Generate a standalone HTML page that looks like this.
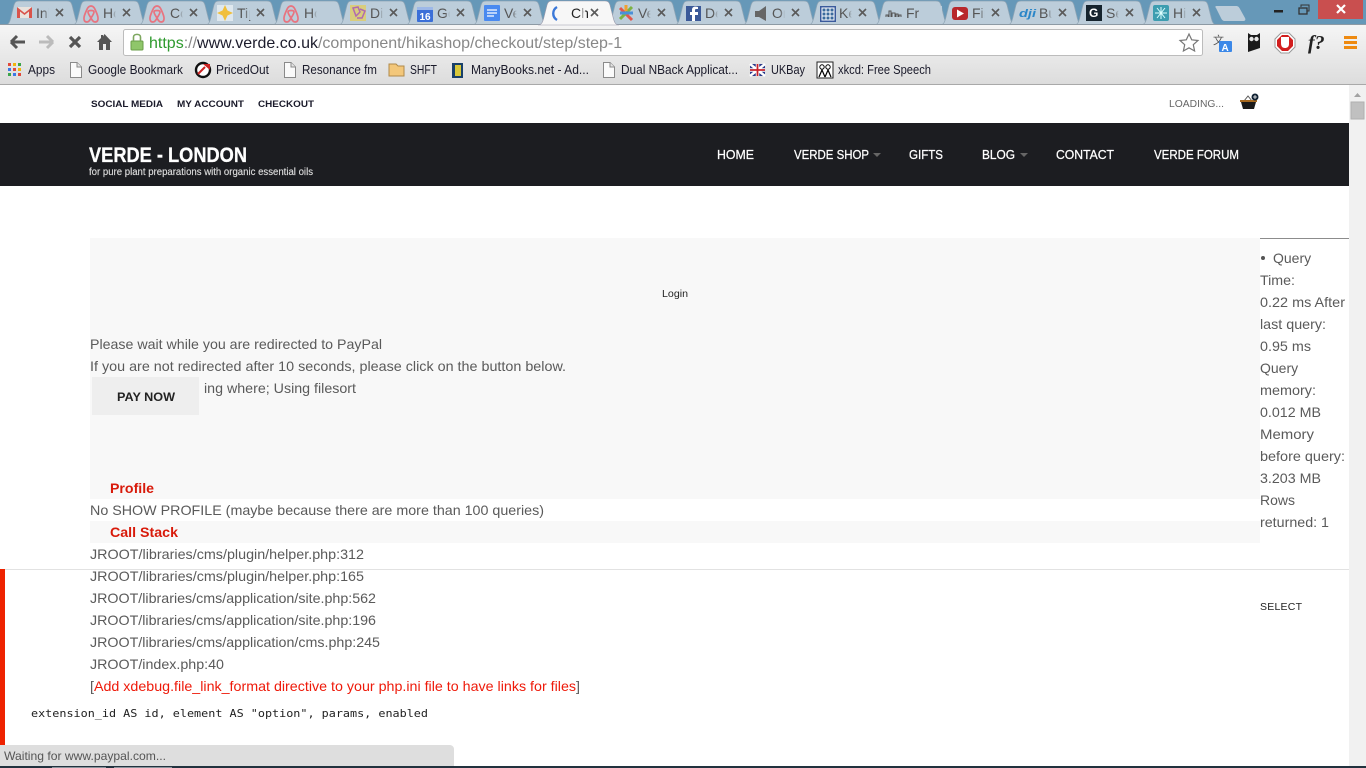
<!DOCTYPE html>
<html lang="en"><head><meta charset="utf-8"><title>Checkout</title>
<style>
html,body{margin:0;padding:0;background:#fff;overflow:hidden;width:1366px;height:768px}
svg{display:block;position:absolute;left:0;top:0}
text{font-family:"Liberation Sans",sans-serif;white-space:pre}
.b{font-size:14px;fill:#5a5a5a}
.t{font-size:14px;fill:#555}
.c{font-size:12.5px;fill:#1a1a2a}
.x{stroke:#5a5a5a;stroke-width:1.6;fill:none}
.n{font-size:12.5px;fill:#fff;stroke:#fff;stroke-width:.25}
</style></head><body>
<svg width="1366" height="768" viewBox="0 0 1366 768">
<defs>
<linearGradient id="tb" x1="0" y1="0" x2="0" y2="1"><stop offset="0" stop-color="#f6f6f6"/><stop offset="1" stop-color="#dcdcdc"/></linearGradient>
<linearGradient id="fd"><stop offset="0" stop-color="#bccdda" stop-opacity="0"/><stop offset="1" stop-color="#bccdda"/></linearGradient>
<linearGradient id="fa"><stop offset="0" stop-color="#f7f7f7" stop-opacity="0"/><stop offset="1" stop-color="#f7f7f7"/></linearGradient>
<path id="tab" d="M-12 25C-8 25-7 21-6 17L-3 5C-2 2-1 1 2 1H50C53 1 54 2 55 5L58 17C59 21 60 25 64 25Z" fill="#bccdda" stroke="#8ea4b4" stroke-width=".7"/>
<path id="cl" d="M0 0L7 7M7 0L0 7" class="x"/>
<g id="fade"><rect x="8" y="6" width="5" height="14" fill="url(#fd)"/><rect x="13" y="6" width="19" height="14" fill="#bccdda"/></g>
<g id="doc"><path d="M1.500 .5H8L12.500 5V15.500H1.500Z" fill="#fafafa" stroke="#8a8a8a"/><path d="M8 .5V5H12.500" fill="#e4e4e4" stroke="#8a8a8a"/></g>
</defs>
<rect width="1366" height="25" fill="#6698b8"/>
<rect x="1318" y="0" width="45" height="19" fill="#c94f4f"/>
<path d="M1337 5L1345 13M1345 5L1337 13" stroke="#fff" stroke-width="2.200"/>
<rect x="1274" y="10" width="9" height="2.500" fill="#222"/>
<rect x="1299" y="8" width="8" height="6" fill="none" stroke="#333" stroke-width="1.300"/><path d="M1301 7V5H1309V11H1307" fill="none" stroke="#333" stroke-width="1"/>
<path d="M1217 6H1236C1238 6 1239 7 1240 9L1245 18C1246 20 1245 21 1243 21H1225C1223 21 1222 20 1221 18L1216 8C1215 7 1215 6 1217 6Z" fill="#bccdda"/>

<!-- tabs -->
<use href="#tab" x="17"/><use href="#tab" x="84"/><use href="#tab" x="150"/><use href="#tab" x="217"/><use href="#tab" x="284"/><use href="#tab" x="350"/><use href="#tab" x="417"/><use href="#tab" x="484"/><use href="#tab" x="618"/><use href="#tab" x="686"/><use href="#tab" x="754"/><use href="#tab" x="820"/><use href="#tab" x="886"/><use href="#tab" x="952"/><use href="#tab" x="1019"/><use href="#tab" x="1086"/><use href="#tab" x="1153"/>

<rect y="24" width="1366" height="61" fill="url(#tb)"/>
<rect y="24" width="1366" height="1" fill="#8d9aa4"/>
<path d="M538 25C542 25 543 21 544 17L547 5C548 2 549 1 552 1H605C608 1 609 2 610 5L613 17C614 21 615 25 619 25Z" fill="#f7f7f7" stroke="#99a" stroke-width=".6"/>

<!-- tab labels -->
<text class="t" x="36" y="18">Inb</text><text class="t" x="103" y="18">Ho</text><text class="t" x="170" y="18">Co</text><text class="t" x="237" y="18">Tip</text><text class="t" x="304" y="18">Ho</text><text class="t" x="370" y="18">Dis</text><text class="t" x="437" y="18">Go</text><text class="t" x="504" y="18">Ve</text><text x="571" y="18" font-size="14" fill="#222">Ch</text><text class="t" x="638" y="18">Ve</text><text class="t" x="705" y="18">De</text><text class="t" x="772" y="18">On</text><text class="t" x="839" y="18">Ke</text><text class="t" x="906" y="18">Fr</text><text class="t" x="972" y="18">Fin</text><text class="t" x="1039" y="18">Bu</text><text class="t" x="1106" y="18">Se</text><text class="t" x="1173" y="18">Hi</text>
<use href="#fade" x="36"/><use href="#fade" x="103"/><use href="#fade" x="170"/><use href="#fade" x="237"/><use href="#fade" x="304"/><use href="#fade" x="370"/><use href="#fade" x="437"/><use href="#fade" x="504"/><use href="#fade" x="638"/><use href="#fade" x="705"/><use href="#fade" x="772"/><use href="#fade" x="839"/><use href="#fade" x="910"/><use href="#fade" x="972"/><use href="#fade" x="1039"/><use href="#fade" x="1106"/><use href="#fade" x="1173"/>
<rect x="579" y="6" width="6" height="14" fill="url(#fa)"/>

<!-- favicons -->
<rect x="17" y="7" width="15" height="11" fill="#e9e3de"/><path d="M17 7L24.500 13L32 7V18H29V11.500L24.500 15L20 11.500V18H17Z" fill="#d9534a"/>
<g fill="none" stroke="#e8737f" stroke-width="1.700"><path d="M91 6C88 6 87 9 85 14C83 19 84 22 87 22C89 22 90 20 91 18C92 20 93 22 95 22C98 22 99 19 97 14C95 9 94 6 91 6ZM91 18C89 15 88 13 88 12C88 10 94 10 94 12C94 13 93 15 91 18Z"/>
<path d="M157 6C154 6 153 9 151 14C149 19 150 22 153 22C155 22 156 20 157 18C158 20 159 22 161 22C164 22 165 19 163 14C161 9 160 6 157 6ZM157 18C155 15 154 13 154 12C154 10 160 10 160 12C160 13 159 15 157 18Z"/>
<path d="M291 6C288 6 287 9 285 14C283 19 284 22 287 22C289 22 290 20 291 18C292 20 293 22 295 22C298 22 299 19 297 14C295 9 294 6 291 6ZM291 18C289 15 288 13 288 12C288 10 294 10 294 12C294 13 293 15 291 18Z"/></g>
<rect x="217" y="5" width="16" height="16" fill="#dfe8ee"/><path d="M225 5L227.500 10.500L233 13L227.500 15.500L225 21L222.500 15.500L217 13L222.500 10.500Z" fill="#f0bf3c"/>
<rect x="350" y="5" width="16" height="16" fill="#d9cd7c"/><path d="M353 8L358 7L360 12L356 16ZM360 9L365 11L362 18L357 18" fill="none" stroke="#b06ab0" stroke-width="1.500"/>
<rect x="417" y="7" width="16" height="15" rx="1" fill="#3b6fd8"/><rect x="417" y="7" width="16" height="3" fill="#9db8e8"/><text x="419.500" y="20" font-size="10" font-weight="bold" fill="#fff">16</text>
<rect x="484" y="5" width="16" height="16" rx="1" fill="#4a8af0"/><path d="M487 10H497M487 13H497M487 16H494" stroke="#fff" stroke-width="1.200"/>
<path d="M557 7C552 10 552 17 557 20" fill="none" stroke="#3b78d8" stroke-width="2.400"/>
<g stroke-width="3" fill="none"><path d="M620 8L632 20" stroke="#e2574c"/><path d="M632 7L620 19" stroke="#7cb342"/><path d="M626 5V11" stroke="#f0a030"/><path d="M620 13H633" stroke="#4a90d9"/></g>
<rect x="686" y="6" width="15" height="15" fill="#3b5998"/><path d="M695 21V15H698V12H695V10C695 9 696 9 698 9V7C694 6 692 7 692 10V12H690V15H692V21Z" fill="#fff"/>
<path d="M755 11H759L766 6V21L759 17H755Z" fill="#666"/>
<rect x="820" y="6" width="16" height="16" fill="#3a5a9c"/><path d="M822 8H834V20H822ZM822 12H834M822 16H834M826 8V20M830 8V20" stroke="#fff" stroke-width="1" fill="#3a6a9c"/>
<path d="M886 17V15H888V17M889 17V11H891V17M892 17V13H895V17M896 17V14H898V17M899 17V15H901V17" stroke="#555" stroke-width="1" fill="none"/>
<rect x="952" y="7" width="16" height="13" rx="3" fill="#b8282c"/><path d="M957 9.500L964 13.500L957 17.500Z" fill="#fff"/>
<text x="1019" y="17" font-size="11" font-weight="bold" font-style="italic" fill="#2a86c8" textLength="17" lengthAdjust="spacingAndGlyphs">dji</text>
<rect x="1086" y="5" width="16" height="16" fill="#15232d"/><text x="1089" y="17" font-size="12" font-weight="bold" fill="#fff">G</text>
<rect x="1153" y="5" width="16" height="16" rx="2" fill="#3d9db0"/><path d="M1161 7V19M1155 13H1167M1157 8L1165 18M1165 8L1157 18" stroke="#dff" stroke-width="1"/>

<!-- close -->
<use href="#cl" x="56" y="9"/><use href="#cl" x="123" y="9"/><use href="#cl" x="190" y="9"/><use href="#cl" x="257" y="9"/><use href="#cl" x="390" y="9"/><use href="#cl" x="457" y="9"/><use href="#cl" x="524" y="9"/><use href="#cl" x="591" y="9"/><use href="#cl" x="658" y="9"/><use href="#cl" x="725" y="9"/><use href="#cl" x="792" y="9"/><use href="#cl" x="859" y="9"/><use href="#cl" x="992" y="9"/><use href="#cl" x="1059" y="9"/><use href="#cl" x="1126" y="9"/><use href="#cl" x="1193" y="9"/>

<!-- toolbar -->
<path d="M25 42H11M11 42L17 36M11 42L17 48" stroke="#555" stroke-width="3" fill="none"/>
<path d="M39 42H53M53 42L47 36M53 42L47 48" stroke="#bbb" stroke-width="3" fill="none"/>
<path d="M70 37L80 47M80 37L70 47" stroke="#555" stroke-width="3.200"/>
<path d="M104.500 34L112 42H110V50H106V44H103V50H99V42H97L101 38V35H103V36.500Z" fill="#555"/>
<rect x="123.500" y="29.500" width="1079" height="26" rx="2" fill="#fff" stroke="#bcbcbc"/>
<rect x="131" y="41" width="12" height="9" rx="1" fill="#8fc66a" stroke="#6a9e48"/><path d="M133.500 41V37C133.500 33.500 140.500 33.500 140.500 37V41" fill="none" stroke="#7da75f" stroke-width="1.600"/>
<text x="149" y="48" font-size="16" fill="#888"><tspan fill="#2e9a2e">https</tspan><tspan fill="#888">://</tspan><tspan fill="#1c1c2c">www.verde.co.uk</tspan><tspan>/component/hikashop/checkout/step/step-1</tspan></text>
<path d="M1189 34L1191.700 39.800L1198 40.500L1193.300 44.700L1194.600 51L1189 47.800L1183.400 51L1184.700 44.700L1180 40.500L1186.300 39.800Z" fill="#fff" stroke="#777" stroke-width="1.200"/>
<text x="1213" y="44" font-size="11" fill="#555" style="font-family:'Noto Sans CJK SC',sans-serif">文</text>
<rect x="1219" y="41" width="13" height="11" rx="1" fill="#3b88e8"/><text x="1221.500" y="51" font-size="10" font-weight="bold" fill="#fff">A</text>
<path d="M1248 33L1251 35H1257L1260 33V48L1248 52Z" fill="#1a1a1a"/><circle cx="1251.500" cy="39" r="2.200" fill="#e6e6e6"/><circle cx="1256.500" cy="39" r="2.200" fill="#e6e6e6"/>
<path d="M1281 33H1289L1295 39V47L1289 53H1281L1275 47V39Z" fill="#fff" stroke="#999"/><path d="M1282 35H1288L1293 40V46L1288 51H1282L1277 46V40Z" fill="#d21f1f"/><path d="M1281 43V37H1289V44C1289 47 1287 48 1285 48C1282 48 1281 46 1281 43Z" fill="#fff"/>
<text x="1308" y="49" font-size="20" font-style="italic" fill="#222" style="font-family:'Liberation Serif',serif;font-weight:bold">f?</text>
<rect x="1344" y="36" width="13" height="3" fill="#ee8a10"/><rect x="1344" y="41" width="13" height="3" fill="#ee8a10"/><rect x="1344" y="46" width="13" height="3" fill="#ee8a10"/>

<!-- bookmarks -->
<rect x="8" y="63" width="3" height="3" fill="#e2493b"/><rect x="13" y="63" width="3" height="3" fill="#f2b50c"/><rect x="18" y="63" width="3" height="3" fill="#3ca54a"/>
<rect x="8" y="68" width="3" height="3" fill="#3b78e7"/><rect x="13" y="68" width="3" height="3" fill="#e2493b"/><rect x="18" y="68" width="3" height="3" fill="#f2b50c"/>
<rect x="8" y="73" width="3" height="3" fill="#3ca54a"/><rect x="13" y="73" width="3" height="3" fill="#3b78e7"/><rect x="18" y="73" width="3" height="3" fill="#e2493b"/>
<text class="c" x="28" y="74" textLength="27" lengthAdjust="spacingAndGlyphs">Apps</text>
<text class="c" x="88" y="74" textLength="95" lengthAdjust="spacingAndGlyphs">Google Bookmark</text>
<text class="c" x="216" y="74" textLength="53" lengthAdjust="spacingAndGlyphs">PricedOut</text>
<text class="c" x="302" y="74" textLength="75" lengthAdjust="spacingAndGlyphs">Resonance fm</text>
<text class="c" x="410" y="74" textLength="27" lengthAdjust="spacingAndGlyphs">SHFT</text>
<text class="c" x="471" y="74" textLength="118" lengthAdjust="spacingAndGlyphs">ManyBooks.net - Ad...</text>
<text class="c" x="621" y="74" textLength="117" lengthAdjust="spacingAndGlyphs">Dual NBack Applicat...</text>
<text class="c" x="771" y="74" textLength="34" lengthAdjust="spacingAndGlyphs">UKBay</text>
<text class="c" x="838" y="74" textLength="93" lengthAdjust="spacingAndGlyphs">xkcd: Free Speech</text>
<use href="#doc" x="69" y="62"/><use href="#doc" x="283" y="62"/><use href="#doc" x="602" y="62"/>
<circle cx="203" cy="70" r="7" fill="#fff" stroke="#111" stroke-width="2.400"/><path d="M198 74L205 67" stroke="#c22" stroke-width="2"/><path d="M203 64H210V70Z" fill="#c22"/>
<path d="M389 64H396L398 66H404V76H389Z" fill="#f3c77a" stroke="#b08a4a"/>
<rect x="452" y="63" width="11" height="15" fill="#18406a"/><rect x="455" y="65" width="6" height="11" fill="#d8c83a"/>
<rect x="750" y="64" width="15" height="12" fill="#2a3a8a"/><path d="M750 64L765 76M765 64L750 76" stroke="#fff" stroke-width="2.500"/><path d="M757.500 64V76M750 70H765" stroke="#fff" stroke-width="3.500"/><path d="M757.500 64V76M750 70H765" stroke="#c8232c" stroke-width="1.800"/>
<rect x="817" y="62" width="16" height="16" fill="#fff" stroke="#222"/><circle cx="822" cy="67" r="2.200" fill="none" stroke="#000"/><circle cx="828" cy="67" r="2.200" fill="none" stroke="#000"/><path d="M819 77L822 70L825 77M825 77L828 70L831 77" stroke="#000" fill="none" stroke-width="1.200"/>
<rect y="84" width="1366" height="1" fill="#a9a9a9"/>

<!-- page -->
<rect y="85" width="1349" height="683" fill="#fff"/>
<text x="91" y="107" font-size="9.500" font-weight="bold" fill="#1a1a2a" textLength="72" lengthAdjust="spacingAndGlyphs">SOCIAL MEDIA</text>
<text x="177" y="107" font-size="9.500" font-weight="bold" fill="#1a1a2a" textLength="67" lengthAdjust="spacingAndGlyphs">MY ACCOUNT</text>
<text x="258" y="107" font-size="9.500" font-weight="bold" fill="#1a1a2a" textLength="56" lengthAdjust="spacingAndGlyphs">CHECKOUT</text>
<text x="1169" y="107" font-size="10.500" fill="#666" textLength="55" lengthAdjust="spacingAndGlyphs">LOADING...</text>
<path d="M1241 102H1256L1254 109H1243Z" fill="#1a1a1a"/><path d="M1244 101L1248 96L1252 101" fill="none" stroke="#555"/><rect x="1240" y="100" width="17" height="2" fill="#a86a20"/><circle cx="1255" cy="97" r="3.500" fill="#123"/><path d="M1253 97H1257M1255 95V99" stroke="#fff" stroke-width=".8"/>

<rect y="123" width="1349" height="63" fill="#1c1d21"/>
<text x="89" y="162" font-size="21" font-weight="bold" fill="#fff" stroke="#fff" stroke-width=".3" textLength="158" lengthAdjust="spacingAndGlyphs" style="font-family:'Liberation Sans Narrow','Liberation Sans',sans-serif">VERDE - LONDON</text>
<text x="89" y="175" font-size="10" fill="#dcdcdc" stroke="#dcdcdc" stroke-width=".15" textLength="224" lengthAdjust="spacingAndGlyphs">for pure plant preparations with organic essential oils</text>
<text class="n" x="717" y="159" textLength="37" lengthAdjust="spacingAndGlyphs">HOME</text>
<text class="n" x="794" y="159" textLength="75" lengthAdjust="spacingAndGlyphs">VERDE SHOP</text>
<text class="n" x="909" y="159" textLength="34" lengthAdjust="spacingAndGlyphs">GIFTS</text>
<text class="n" x="982" y="159" textLength="33" lengthAdjust="spacingAndGlyphs">BLOG</text>
<text class="n" x="1056" y="159" textLength="58" lengthAdjust="spacingAndGlyphs">CONTACT</text>
<text class="n" x="1154" y="159" textLength="85" lengthAdjust="spacingAndGlyphs">VERDE FORUM</text>
<path d="M873 153H881L877 157ZM1020 153H1028L1024 157Z" fill="#666"/>

<rect x="90" y="238" width="1170" height="261" fill="#f8f8f8"/>
<rect x="90" y="521" width="1170" height="22" fill="#f8f8f8"/>
<rect x="1260" y="238" width="89" height="1" fill="#8c8c8c"/>
<rect y="569" width="1349" height="1" fill="#e2e2e2"/>
<rect y="569" width="5" height="199" fill="#ee2200"/>

<text x="662" y="297" font-size="10" fill="#222" textLength="26" lengthAdjust="spacingAndGlyphs">Login</text>
<text class="b" x="90" y="349" textLength="292" lengthAdjust="spacingAndGlyphs">Please wait while you are redirected to PayPal</text>
<text class="b" x="90" y="371" textLength="476" lengthAdjust="spacingAndGlyphs">If you are not redirected after 10 seconds, please click on the button below.</text>
<rect x="92" y="377" width="107" height="38" fill="#eeeeee"/>
<text x="117" y="401" font-size="12" font-weight="bold" fill="#222" textLength="58" lengthAdjust="spacingAndGlyphs">PAY NOW</text>
<text class="b" x="204" y="393" textLength="152" lengthAdjust="spacingAndGlyphs">ing where; Using filesort</text>
<text x="110" y="493" font-size="14" font-weight="bold" fill="#d81a0a" textLength="44" lengthAdjust="spacingAndGlyphs">Profile</text>
<text class="b" x="90" y="515" textLength="454" lengthAdjust="spacingAndGlyphs">No SHOW PROFILE (maybe because there are more than 100 queries)</text>
<text x="110" y="537" font-size="14" font-weight="bold" fill="#d81a0a" textLength="68" lengthAdjust="spacingAndGlyphs">Call Stack</text>
<text class="b" x="90" y="559" textLength="274" lengthAdjust="spacingAndGlyphs">JROOT/libraries/cms/plugin/helper.php:312</text>
<text class="b" x="90" y="581" textLength="274" lengthAdjust="spacingAndGlyphs">JROOT/libraries/cms/plugin/helper.php:165</text>
<text class="b" x="90" y="603" textLength="286" lengthAdjust="spacingAndGlyphs">JROOT/libraries/cms/application/site.php:562</text>
<text class="b" x="90" y="625" textLength="286" lengthAdjust="spacingAndGlyphs">JROOT/libraries/cms/application/site.php:196</text>
<text class="b" x="90" y="647" textLength="290" lengthAdjust="spacingAndGlyphs">JROOT/libraries/cms/application/cms.php:245</text>
<text class="b" x="90" y="669" textLength="134" lengthAdjust="spacingAndGlyphs">JROOT/index.php:40</text>
<text class="b" x="90" y="691" textLength="490" lengthAdjust="spacingAndGlyphs">[<tspan fill="#ee1a0a">Add xdebug.file_link_format directive to your php.ini file to have links for files</tspan>]</text>

<circle cx="1263" cy="258" r="2" fill="#555"/>
<text class="b" x="1273" y="263">Query</text>
<text class="b" x="1260" y="285" textLength="35" lengthAdjust="spacingAndGlyphs">Time:</text>
<text class="b" x="1260" y="307" textLength="85" lengthAdjust="spacingAndGlyphs">0.22 ms After</text>
<text class="b" x="1260" y="329" textLength="66" lengthAdjust="spacingAndGlyphs">last query:</text>
<text class="b" x="1260" y="351" textLength="51" lengthAdjust="spacingAndGlyphs">0.95 ms</text>
<text class="b" x="1260" y="373">Query</text>
<text class="b" x="1260" y="395" textLength="56" lengthAdjust="spacingAndGlyphs">memory:</text>
<text class="b" x="1260" y="417" textLength="61" lengthAdjust="spacingAndGlyphs">0.012 MB</text>
<text class="b" x="1260" y="439" textLength="54" lengthAdjust="spacingAndGlyphs">Memory</text>
<text class="b" x="1260" y="461" textLength="85" lengthAdjust="spacingAndGlyphs">before query:</text>
<text class="b" x="1260" y="483" textLength="61" lengthAdjust="spacingAndGlyphs">3.203 MB</text>
<text class="b" x="1260" y="505">Rows</text>
<text class="b" x="1260" y="527" textLength="69" lengthAdjust="spacingAndGlyphs">returned: 1</text>
<text x="1260" y="610" font-size="10.500" fill="#222" textLength="42" lengthAdjust="spacing">SELECT</text>
<text x="31" y="717" font-size="11" fill="#222" style="font-family:'DejaVu Sans Mono','Liberation Mono',monospace" textLength="397" lengthAdjust="spacingAndGlyphs">extension_id AS id, element AS "option", params, enabled</text>

<!-- scrollbar -->
<rect x="1349" y="85" width="17" height="683" fill="#f1f1f1"/>
<path d="M1354 97L1357.500 93L1361 97Z" fill="#a3a3a3"/>
<rect x="1351" y="102" width="13" height="17" fill="#c0c0c0" stroke="#b0b0b0"/>

<!-- status bubble -->
<path d="M0 745H450C452 745 454 747 454 749V766H0Z" fill="#dedede"/>
<text x="4" y="760" font-size="12" fill="#555" textLength="162" lengthAdjust="spacingAndGlyphs">Waiting for www.paypal.com...</text>
<rect y="766" width="1366" height="2" fill="#22323e"/>
<rect x="52" y="767" width="54" height="1" fill="#8a949c"/><rect x="114" y="767" width="58" height="1" fill="#8a949c"/>
</svg>
</body></html>
